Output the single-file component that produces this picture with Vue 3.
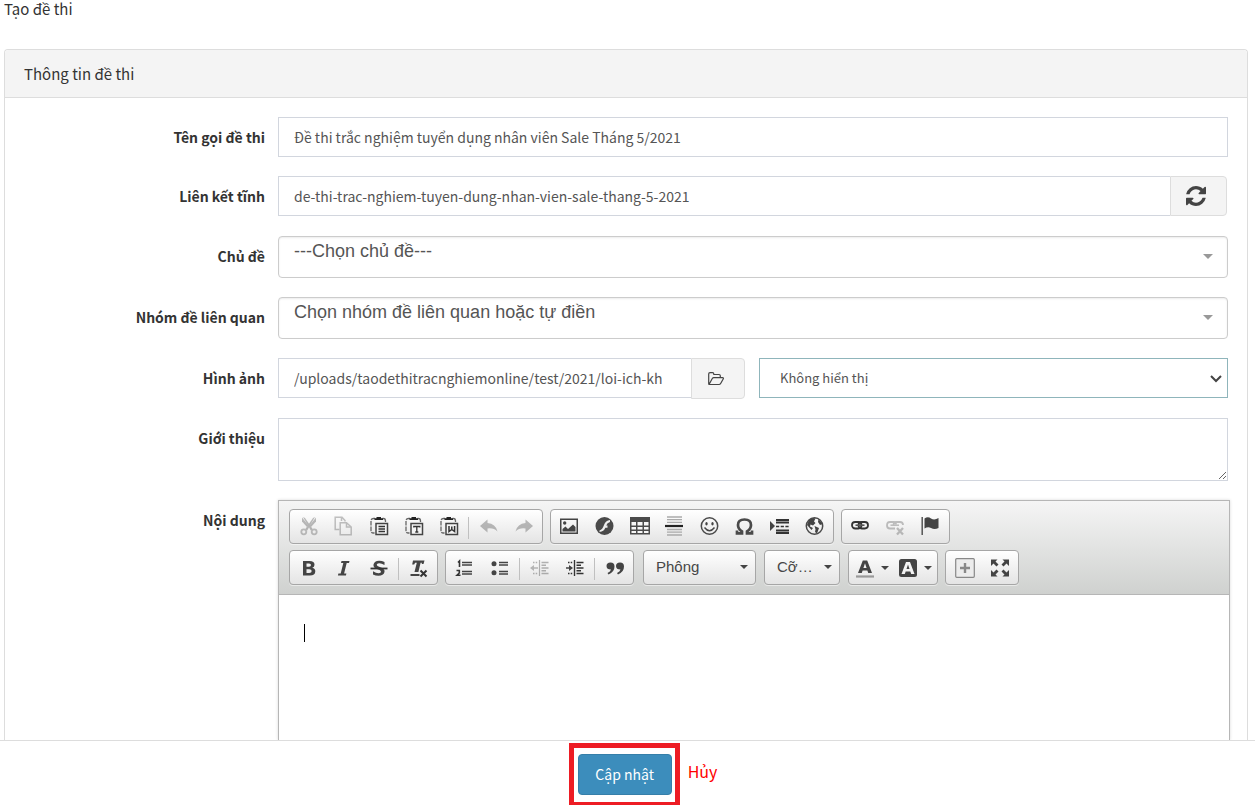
<script setup>
import { ref } from 'vue'

const name = ref('Đề thi trắc nghiệm tuyển dụng nhân viên Sale Tháng 5/2021')
const slug = ref('de-thi-trac-nghiem-tuyen-dung-nhan-vien-sale-thang-5-2021')
const image = ref('/uploads/taodethitracnghiemonline/test/2021/loi-ich-kh')
const intro = ref('')

const clipboard =
  '<path d="M6 2.500H4.500Q2 2.500 2 5V14.500Q2 17 4.500 17H5.500" fill="none" stroke="#666" stroke-width="1.300" stroke-dasharray="4.500 1"/>' +
  '<path d="M13.500 2.500H14.500Q16.500 2.500 16.500 5V6" fill="none" stroke="#666" stroke-width="1.300"/>' +
  '<path d="M5.500 4V2.300H7.500V1H12V2.300H14V4Z" fill="#222"/>' +
  '<rect x="7" y="7.500" width="11.500" height="11" fill="#f4f4f4" stroke="#444" stroke-width="1.500"/>'

const icons = {
  cut: '<path d="M4 1L6 2L14 13.500L11.800 14.500Z"/><path d="M16 1L14 2L6 13.500L8.200 14.500Z"/><path d="M3 1.500V5.500L8 11L9.500 9.500Z"/><path d="M17 1.500V5.500L12 11L10.500 9.500Z"/><g fill="none" stroke="#555" stroke-width="1.800"><circle cx="4.800" cy="15.800" r="2.500"/><circle cx="15.200" cy="15.800" r="2.500"/></g>',
  copy: '<g fill="none" stroke="#555" stroke-width="1.500"><path d="M5.500 13.500H1.200V1.200H8L11 4.500V5.500M7.500 1.500V5"/><path d="M6.200 6.800H12.500L17.200 11V18.800H6.200Z"/><path d="M12.500 7V11H17"/></g>',
  paste: clipboard + '<path d="M9.500 10.500H16M9.500 13H16M9.500 15.500H16" stroke="#333" stroke-width="1.300"/>',
  pasteText: clipboard + '<path d="M9.800 11.500V10.500H15.800V11.500M12.800 10.500V16M11.300 16H14.300" fill="none" stroke="#333" stroke-width="1.300"/>',
  pasteWord: clipboard + '<path d="M10 10V15.500L12.800 13.500L15.600 15.500V10M12.800 10.500V13.500" fill="none" stroke="#333" stroke-width="1.500"/>',
  undo: '<path d="M1 10L8.500 3.500V7Q16.500 7.500 18.500 15.500Q14.500 11.500 8.500 12.500V16.500Z"/>',
  redo: '<path d="M19 10L11.500 3.500V7Q3.500 7.500 1.500 15.500Q5.500 11.500 11.500 12.500V16.500Z"/>',
  image: '<path fill-rule="evenodd" d="M0 2.500H18V18H0ZM1.500 4V16.500H16.500V4Z"/><circle cx="4.700" cy="7" r="1.700"/><path d="M2.500 15.500V13L5.500 10.500L8 13L13 8.500L15.500 11V15.500Z"/>',
  flash: '<circle cx="9.500" cy="10" r="9" fill="#4a4a4a"/><path d="M15 4Q10.500 4.500 9 9Q7.500 13.500 4.500 14.500V16Q9 15.500 10.300 11.700H12.500V9.500H11.200Q12.100 6.500 15 6Z" fill="#eee"/>',
  table: '<path d="M0 1H20V18.500H0Z" fill="#4a4a4a"/><path d="M1.500 6H6V9.500H1.500ZM7.500 6H12.500V9.500H7.500ZM14 6H18.500V9.500H14ZM1.500 11H6V13.500H1.500ZM7.500 11H12.500V13.500H7.500ZM14 11H18.500V13.500H14ZM1.500 15H6V17H1.500ZM7.500 15H12.500V17H7.500ZM14 15H18.500V17H14Z" fill="#f6f6f6"/>',
  rule: '<path d="M2 1H17M2 3.700H17M2 6.400H17M2 13.500H17M2 16.200H17M2 19H17" stroke="#aaa" stroke-width="1.300"/><path d="M0 10H18" stroke="#222" stroke-width="2.200"/>',
  smiley: '<circle cx="9.500" cy="10" r="8.200" fill="none" stroke="#4a4a4a" stroke-width="1.500"/><ellipse cx="6.500" cy="7.800" rx="1.200" ry="1.700"/><ellipse cx="12.500" cy="7.800" rx="1.200" ry="1.700"/><path d="M4.500 11.500Q9.500 18 14.500 11.500" fill="none" stroke="#444" stroke-width="1.400"/>',
  omega: '<path d="M2 14.500V17.300H7V15.500Q3 13 3 9Q3 3.500 9.500 3.500Q16 3.500 16 9Q16 13 12 15.500V17.300H17V14.500" fill="none" stroke="#4a4a4a" stroke-width="2.700"/>',
  pageBreak: '<path d="M0 5L5 10L0 15Z"/><path d="M6 4H19M6 6.500H19M6 14.500H19M6 17H19" stroke="#333" stroke-width="2"/><path d="M6 10.500H19" stroke="#333" stroke-width="1.400" stroke-dasharray="3.200 1.500"/>',
  globe: '<circle cx="9.500" cy="10" r="8.200" fill="none" stroke="#4a4a4a" stroke-width="1.500"/><path d="M4 4Q7.500 1 10.500 2.500L9 5.500L10.500 7L8 9.500L5.500 8.500L5 10.500L8 12L6.500 14L2 9Z"/><path d="M9.500 10L14 12L12 17.500L10 16L10.500 13.500ZM13.500 3L17.500 8L15 9L13 6Z"/>',
  link: '<g fill="none" stroke="#333" stroke-width="1.800"><rect x="1" y="6" width="9.500" height="6.500" rx="3.200"/><rect x="7.500" y="6" width="9.500" height="6.500" rx="3.200"/></g><path d="M4.500 9.200H13.500" stroke="#555" stroke-width="1.600"/>',
  unlink: '<g fill="none" stroke="#555" stroke-width="1.800"><path d="M9 12.500H4Q1 12.500 1 9.500Q1 6 4 6H7.500Q10 6 10 8.500"/><path d="M7.500 9.500Q7.500 6 10.500 6H14Q17 6 17 9"/><path d="M4.500 9.200H13" stroke-width="1.500"/><path d="M11 12L17 18.500M17 12L11 18.500" stroke-width="2.300"/></g>',
  flag: '<path d="M1.200 1V19" stroke="#555" stroke-width="1.500"/><path d="M3.500 2.500Q7 0 10 2.500Q13.500 4.500 17.500 2V12Q13.500 14 10 12Q7 10.500 3.500 12.500Z"/>',
  bold: '<path fill-rule="evenodd" d="M4 3H10.500Q15.500 3 15.500 6.700Q15.500 9 13.300 9.700Q16.300 10.300 16.300 13.200Q16.300 17.500 10.800 17.500H4ZM7.500 5.600V8.700H10Q12 8.700 12 7.100Q12 5.600 10 5.600ZM7.500 11.200V14.900H10.200Q12.700 14.900 12.700 13Q12.700 11.200 10.200 11.200Z"/>',
  italic: '<path d="M7.500 3H15.500L15 5H12.700L10.100 15.500H12.400L11.900 17.500H3.900L4.400 15.500H6.700L9.300 5H7Z"/>',
  strike: '<path d="M15.500 4V7Q11.500 4.700 9 5.500Q6.500 6.500 9 8.300L12 9.500Q16 11 15.500 14Q14.500 17.800 9.500 17.800Q6.500 17.800 4 16.500V13.300Q8 15.700 10.700 15Q13.200 14.200 11 12.300L8 11Q4 9.500 4.500 6.500Q5.300 3 10 2.800Q12.700 2.700 15.500 4Z"/><path d="M1.500 10.500H18.500" stroke="#333" stroke-width="1.800"/>',
  removeFormat: '<path d="M4 2.500H15.500L14.500 6H12.800V4.800H11.600L9.400 14H5.500L7.800 4.800H6.100L5.200 6.500H3.200Z"/><path d="M1.500 17H10.500" stroke="#444" stroke-width="2"/><path d="M11.500 12.500L17.500 18.500M17.500 12.500L11.500 18.500" stroke="#333" stroke-width="2"/>',
  ordered: '<path d="M3 4.500L4.500 3V9M1.500 12.500H4.300V15L2 17.300H5.500" fill="none" stroke="#333" stroke-width="1.600"/><path d="M7 4.500H17M7 7H17M7 13.500H17M7 16H17" stroke="#444" stroke-width="1.500"/>',
  bullets: '<circle cx="4" cy="5.700" r="2.500"/><circle cx="4" cy="14.700" r="2.500"/><path d="M9 4.500H18M9 7H18M9 13.500H18M9 16H18" stroke="#444" stroke-width="1.500"/>',
  outdent: '<path d="M0 10L4 7V9.200H8V10.800H4V13Z"/><path d="M3 4.500H8M3 15.500H8" stroke="#333" stroke-width="1.500" stroke-dasharray="1.500 1.200"/><path d="M9.500 2V18" stroke="#333" stroke-width="1.200"/><path d="M11.500 4.500H18.500M11.500 7.300H16M11.500 10H18.500M11.500 12.700H16M11.500 15.500H18.500" stroke="#333" stroke-width="1.500"/>',
  indent: '<path d="M8 10L4 7V9.200H1V10.800H4V13Z"/><path d="M3 4.500H8M3 15.500H8" stroke="#333" stroke-width="1.500" stroke-dasharray="1.500 1.200"/><path d="M9.500 2V18" stroke="#333" stroke-width="1.400"/><path d="M11.500 4.500H18.500M11.500 7.300H16M11.500 10H18.500M11.500 12.700H16M11.500 15.500H18.500" stroke="#333" stroke-width="1.600"/>',
  quote: '<path d="M5.500 4.500Q9.500 4.500 9.500 8.500Q9.500 14 3.500 16.500L2.500 15Q5.500 13.500 6 11.500Q1.500 11.500 1.500 8Q1.500 4.500 5.500 4.500ZM15 4.500Q19 4.500 19 8.500Q19 14 13 16.500L12 15Q15 13.500 15.500 11.500Q11 11.500 11 8Q11 4.500 15 4.500Z"/>',
  textColor: '<path fill-rule="evenodd" d="M3 15L7.800 2.500H12.200L17 15H13.200L12.400 12.500H7.600L6.800 15ZM8.400 10H11.600L10 5.200Z"/><path d="M1 18.500H19" stroke="#999" stroke-width="2.200"/>',
  bgColor: '<rect x="1" y="1" width="18" height="18" rx="2.500" fill="#444"/><path fill-rule="evenodd" fill="#f4f4f4" d="M3.500 16L8 4H12L16.500 16H13.200L12.300 13.500H7.700L6.800 16ZM8.500 11H11.500L10 6.500Z"/>',
  blocks: '<rect x="0.700" y="0.700" width="18.600" height="18.600" rx="1" fill="#ececec" stroke="#888" stroke-width="1.200"/><path d="M10 5V15M5 10H15" stroke="#888" stroke-width="2.400"/>',
  maximize: '<path d="M1 1.500H7.500L5.500 3.500L8.500 6.500L6.500 8.500L3.500 5.500L1 8ZM19 1.500H12.500L14.500 3.500L11.500 6.500L13.500 8.500L16.500 5.500L19 8ZM1 18.500H7.500L5.500 16.500L8.500 13.500L6.500 11.500L3.500 14.500L1 12ZM19 18.500H12.500L14.500 16.500L11.500 13.500L13.500 11.500L16.500 14.500L19 12Z"/>',
}

const row1 = [
  [['cut', 'Cắt', true], ['copy', 'Sao chép', true], ['paste', 'Dán'], ['pasteText', 'Dán văn bản'], ['pasteWord', 'Dán từ Word'], null, ['undo', 'Hoàn tác', true], ['redo', 'Làm lại', true]],
  [['image', 'Hình ảnh'], ['flash', 'Flash'], ['table', 'Bảng'], ['rule', 'Đường kẻ'], ['smiley', 'Biểu cảm'], ['omega', 'Ký tự đặc biệt'], ['pageBreak', 'Ngắt trang'], ['globe', 'Iframe']],
  [['link', 'Liên kết'], ['unlink', 'Bỏ liên kết', true], ['flag', 'Neo']],
]
const row2 = [
  [['bold', 'Đậm'], ['italic', 'Nghiêng'], ['strike', 'Gạch ngang'], null, ['removeFormat', 'Xóa định dạng']],
  [['ordered', 'Danh sách số'], ['bullets', 'Danh sách'], null, ['outdent', 'Giảm lề', true], ['indent', 'Tăng lề'], null, ['quote', 'Trích dẫn']],
  'combos',
  [['textColor', 'Màu chữ', false, true], ['bgColor', 'Màu nền', false, true]],
  [['blocks', 'Hiện khối'], ['maximize', 'Phóng to']],
]
const rows = [row1, row2]
</script>

<template>
  <div class="page">
    <h1 class="title">Tạo đề thi</h1>

    <form id="exam" class="panel" @submit.prevent>
      <h2 class="panel-head">Thông tin đề thi</h2>
      <div class="panel-body">
        <div class="row">
          <label for="name">Tên gọi đề thi</label>
          <input id="name" v-model="name" class="control" type="text" />
        </div>

        <div class="row">
          <label for="slug">Liên kết tĩnh</label>
          <div class="group">
            <input id="slug" v-model="slug" class="control" type="text" />
            <button class="addon wide" type="button" aria-label="Tạo lại liên kết">
              <svg width="20" height="20" viewBox="0 0 1536 1536" fill="#444">
                <path d="M1511 928q0 5-1 7-64 268-268 434.500T764 1536q-146 0-282.500-55T238 1324l-129 129q-19 19-45 19t-45-19-19-45V960q0-26 19-45t45-19h448q26 0 45 19t19 45-19 45l-137 137q71 66 161 102t187 36q134 0 250-65t186-179q11-17 53-117 8-23 30-23h192q13 0 22.500 9.500t9.500 22.500zm25-800v448q0 26-19 45t-45 19h-448q-26 0-45-19t-19-45 19-45l138-138Q969 256 768 256q-134 0-250 65T332 500q-11 17-53 117-8 23-30 23H50q-13 0-22.500-9.500T18 608v-7q65-268 270-434.500T768 0q146 0 284 55.500T1297 212l130-129q19-19 45-19t45 19 19 45z" />
              </svg>
            </button>
          </div>
        </div>

        <div class="row">
          <label for="topic">Chủ đề</label>
          <div class="picker">
            <select id="topic"><option>---Chọn chủ đề---</option></select>
          </div>
        </div>

        <div class="row">
          <label for="related">Nhóm đề liên quan</label>
          <div class="picker">
            <select id="related"><option>Chọn nhóm đề liên quan hoặc tự điền</option></select>
          </div>
        </div>

        <div class="row">
          <label for="image">Hình ảnh</label>
          <div class="split">
            <div class="group">
              <input id="image" v-model="image" class="control" type="text" />
              <button class="addon" type="button" aria-label="Chọn tệp">
                <svg width="18" height="16" viewBox="0 0 18 16" fill="none" stroke="#444" stroke-width="1.200" stroke-linejoin="round">
                  <path d="M2.200 13.500Q1.700 13.200 1.700 12.500V3Q1.700 1.700 3 1.700H5.500Q6.800 1.700 6.800 3V3.500H12Q13.300 3.500 13.300 4.800V6.500M2 13.500L5.300 7.500Q5.800 6.700 6.800 6.700H15.500Q16.900 6.700 16.200 8L13.800 12.300Q13.100 13.500 12 13.500Z" />
                </svg>
              </button>
            </div>
            <div class="display">
              <select aria-label="Hiển thị hình ảnh"><option>Không hiển thị</option></select>
              <svg width="12" height="8" viewBox="0 0 12 8" fill="none" stroke="#444" stroke-width="2"><path d="M1 1L6 6L11 1" /></svg>
            </div>
          </div>
        </div>

        <div class="row">
          <label for="intro">Giới thiệu</label>
          <textarea id="intro" v-model="intro" class="control area"></textarea>
        </div>

        <div class="row grow">
          <label id="content-label">Nội dung</label>
          <div class="editor">
            <div class="toolbar">
              <div v-for="(row, r) in rows" :key="r" class="tools">
                <template v-for="(group, g) in row" :key="g">
                  <div v-if="group === 'combos'" class="combos">
                    <button type="button" class="combo font"><span>Phông</span><i class="arrow"></i></button>
                    <button type="button" class="combo size"><span>Cỡ…</span><i class="arrow"></i></button>
                  </div>
                  <div v-else class="tool-group">
                    <template v-for="(tool, t) in group" :key="t">
                      <span v-if="!tool" class="sep"></span>
                      <button v-else type="button" class="tool" :class="{ menu: tool[3] }" :disabled="tool[2]" :aria-label="tool[1]">
                        <svg width="20" height="20" viewBox="0 0 20 20" fill="#444" v-html="icons[tool[0]]"></svg>
                        <i v-if="tool[3]" class="arrow"></i>
                      </button>
                    </template>
                  </div>
                </template>
              </div>
            </div>
            <div class="content" contenteditable="true" role="textbox" aria-labelledby="content-label"><span class="caret"></span></div>
          </div>
        </div>
      </div>
    </form>

    <footer class="actions">
      <div class="highlight"><button class="save" type="submit" form="exam">Cập nhật</button></div>
      <a class="cancel" href="#">Hủy</a>
    </footer>
  </div>
</template>

<style>
body {
  background: #fff;
}
</style>

<style scoped>
* {
  box-sizing: border-box;
}
.page {
  display: flex;
  flex-direction: column;
  height: 100vh;
  overflow: hidden;
  color: #333;
  font-family: "Noto Sans CJK SC", "Open Sans", sans-serif;
  font-size: 14px;
  line-height: 20px;
}
button,
input,
select,
textarea {
  margin: 0;
  font: inherit;
  color: inherit;
}
.title {
  margin: 0 4px 32px;
  font-size: 15px;
  font-weight: 400;
  line-height: 17px;
}
.panel {
  display: flex;
  flex: 1;
  flex-direction: column;
  min-height: 0;
  margin: 0 7px 0 4px;
  border: 1px solid #ddd;
  border-bottom: 0;
  border-radius: 4px 4px 0 0;
}
.panel-head {
  margin: 0;
  padding: 14px 19px 13px;
  border-bottom: 1px solid #ddd;
  border-radius: 4px 4px 0 0;
  background: #f4f4f4;
  font-size: 15px;
  font-weight: 400;
  line-height: 20px;
}
.panel-body {
  display: flex;
  flex: 1;
  flex-direction: column;
  gap: 19px;
  min-height: 0;
  padding: 19px 19px 0 0;
}
.row {
  display: grid;
  grid-template-columns: 260px minmax(0, 1fr);
  gap: 13px;
}
.row > label {
  padding-top: 10px;
  font-weight: 700;
  text-align: right;
}
.grow {
  flex: 1;
  min-height: 0;
}
.control {
  width: 100%;
  height: 40px;
  padding: 0 15px;
  border: 1px solid #d2d6de;
  border-radius: 0;
  outline: 0;
  background: #fff;
  color: #555;
}
.area {
  display: block;
  height: 63px;
  padding: 10px 15px;
  resize: vertical;
}
.group {
  display: flex;
  align-items: flex-start;
  min-width: 0;
  height: 41px;
}
.group .control {
  flex: 1;
  min-width: 0;
  border-right: 0;
}
.addon {
  display: flex;
  align-items: center;
  justify-content: center;
  width: 54px;
  height: 41px;
  padding: 0 4px 0 0;
  border: 1px solid #ddd;
  border-radius: 0 4px 4px 0;
  background: #f4f4f4;
}
.addon.wide {
  width: 57px;
  height: 40px;
  margin-right: 1px;
  padding-right: 6px;
}
.picker {
  position: relative;
}
.picker::after {
  position: absolute;
  top: 18px;
  right: 15px;
  border: 5px solid transparent;
  border-top-color: #999;
  border-bottom: 0;
  content: "";
}
.picker select {
  display: block;
  width: 100%;
  height: 42px;
  padding: 0 40px 12px 15px;
  border: 1px solid #ccc;
  border-radius: 4px;
  outline: 0;
  background: #fff;
  box-shadow: inset 0 1px 2px rgba(0, 0, 0, 0.08);
  color: #555;
  font-family: "Liberation Sans", Arial, sans-serif;
  font-size: 18px;
  appearance: none;
}
.split {
  display: grid;
  grid-template-columns: minmax(0, 467fr) minmax(0, 469fr);
  gap: 14px;
}
.display {
  position: relative;
}
.display select {
  display: block;
  width: 100%;
  height: 40px;
  padding: 0 30px 0 20px;
  border: 1px solid #8fb5bb;
  border-radius: 0;
  outline: 0;
  background: #fff;
  color: #555;
  font-size: 13px;
  appearance: none;
}
.display svg {
  position: absolute;
  top: 17px;
  right: 6px;
  pointer-events: none;
}
.editor {
  display: flex;
  flex-direction: column;
  margin-right: -2px;
  border: 1px solid #b6b6b6;
  border-bottom: 0;
  box-shadow: 0 0 3px rgba(0, 0, 0, 0.15);
}
.toolbar {
  display: flex;
  flex-direction: column;
  gap: 6px;
  padding: 8px 10px 9px;
  border-bottom: 1px solid #b6b6b6;
  background: linear-gradient(#f5f5f5, #cfd1cf);
}
.tools,
.combos {
  display: flex;
  gap: 7px;
}
.combos {
  gap: 8px;
  margin: 0 1px 0 2px;
}
.tool-group {
  display: flex;
  padding: 0 1px;
}
.tool-group,
.combo {
  height: 35px;
  border: 1px solid #a6a6a6;
  border-radius: 4px;
  background: linear-gradient(#fff, #e4e4e4);
  box-shadow: 0 1px 0 rgba(255, 255, 255, 0.5);
}
.tool {
  display: flex;
  align-items: center;
  justify-content: center;
  width: 35px;
  padding: 0;
  border: 0;
  background: none;
}
.tools:first-child .tool {
  padding-bottom: 2px;
}
.tool:disabled svg {
  opacity: 0.35;
}
.tool.menu {
  gap: 6px;
  width: 43px;
}
.sep {
  width: 1px;
  height: 22px;
  margin: 7px 2px 0;
  background: #c0c0c0;
}
.arrow {
  border: 4px solid transparent;
  border-top-color: #444;
  border-bottom: 0;
}
.combo {
  display: flex;
  align-items: center;
  justify-content: space-between;
  padding: 0 7px 1px 12px;
  color: #474747;
  font-family: "Liberation Sans", Arial, sans-serif;
  font-size: 15px;
}
.font {
  width: 113px;
}
.size {
  width: 76px;
}
.content {
  flex: 1;
  padding: 29px 25px;
  outline: 0;
  background: #fff;
}
.caret {
  display: block;
  width: 1px;
  height: 18px;
  background: #000;
}
.actions {
  display: flex;
  flex: none;
  align-items: flex-start;
  justify-content: center;
  gap: 8px;
  height: 65px;
  padding: 2px 0 0 31px;
  overflow: hidden;
  border-top: 1px solid #ddd;
  background: #fff;
}
.highlight {
  padding: 6px 3px 7px 4px;
  border: 5px solid #ed1c24;
}
.save {
  display: block;
  width: 94px;
  height: 41px;
  padding: 0 0 2px;
  border: 1px solid #367fa9;
  border-radius: 4px;
  background: #3c8dbc;
  color: #fff;
}
.cancel {
  padding-top: 18px;
  color: #f00;
  font-size: 16px;
  text-decoration: none;
}
</style>
